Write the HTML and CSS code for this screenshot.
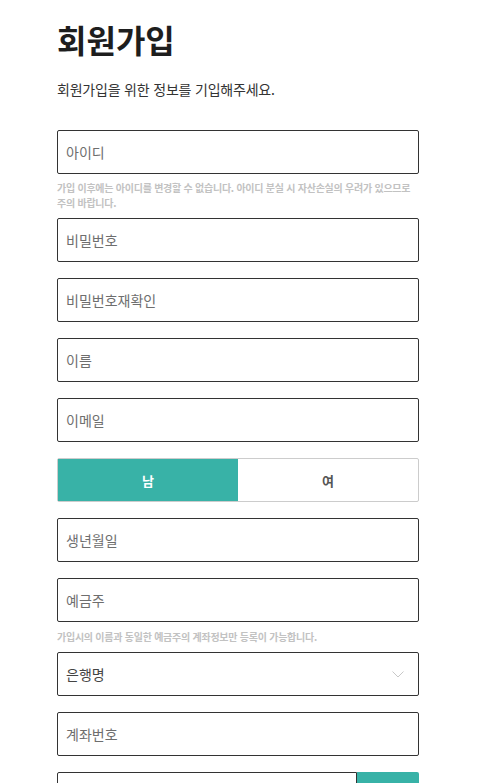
FILE: index.html
```html
<!DOCTYPE html>
<html lang="ko">
<head>
<meta charset="utf-8">
<link rel="stylesheet" href="styles.css">
</head>
<body>
<main class="page">
  <h1 class="title">회원가입</h1>
  <p class="subtitle">회원가입을 위한 정보를 기입해주세요.</p>
  <form class="form">
    <div class="group">
      <div class="field"><span class="ph">아이디</span></div>
      <p class="help">가입 이후에는 아이디를 변경할 수 없습니다. 아이디 분실 시 자산손실의 우려가 있으므로 주의 바랍니다.</p>
    </div>
    <div class="field"><span class="ph">비밀번호</span></div>
    <div class="field"><span class="ph">비밀번호재확인</span></div>
    <div class="field"><span class="ph">이름</span></div>
    <div class="field"><span class="ph">이메일</span></div>
    <div class="gender">
      <div class="opt opt-on">남</div>
      <div class="opt">여</div>
    </div>
    <div class="field"><span class="ph">생년월일</span></div>
    <div class="group">
      <div class="field"><span class="ph">예금주</span></div>
      <p class="help help-single">가입시의 이름과 동일한 예금주의 계좌정보만 등록이 가능합니다.</p>
    </div>
    <div class="field field-select"><span class="ph ph-dark">은행명</span>
      <svg class="chev" width="12" height="7" viewBox="0 0 12 7"><path d="M0.5 0.5 L6 6 L11.5 0.5" fill="none" stroke="#c8c8c8" stroke-width="1"/></svg>
    </div>
    <div class="field"><span class="ph">계좌번호</span></div>
    <div class="row">
      <div class="field field-grow"></div>
      <div class="btn"></div>
    </div>
  </form>
</main>
</body>
</html>
```

FILE: styles.css
```css
html, body {
  margin: 0;
  padding: 0;
  background: #fff;
}
body {
  font-family: "Noto Sans CJK KR", "Noto Sans", sans-serif;
  color: #222;
}
.page {
  width: 362px;
  padding: 0 0 0 57px;
}
.title {
  margin: 0;
  padding-top: 17px;
  font-size: 32px;
  line-height: 44px;
  font-weight: 700;
  color: #1e1e1e;
}
.subtitle {
  margin: 18px 0 0;
  font-size: 14px;
  letter-spacing: -0.2px;
  line-height: 20px;
  color: #333;
}
.form {
  margin-top: 31px;
  display: flex;
  flex-direction: column;
  gap: 16px;
}
.group {
  display: flex;
  flex-direction: column;
  margin-bottom: -8px;
}
.field {
  box-sizing: border-box;
  height: 44px;
  border: 1px solid #333;
  border-radius: 2px;
  display: flex;
  align-items: center;
  justify-content: space-between;
  padding: 0 14px 0 8px;
}
.ph {
  font-size: 14px;
  color: #6e6e6e;
}
.ph-dark {
  color: #444;
}
.help {
  margin: 6px 0 0;
  font-size: 10px;
  letter-spacing: -0.25px;
  line-height: 15px;
  color: #c2c2c2;
  font-weight: 700;
}
.help-single {
  margin-top: 7px;
}
.gender {
  box-sizing: border-box;
  height: 44px;
  border: 1px solid #ccc;
  border-radius: 2px;
  display: grid;
  grid-template-columns: 1fr 1fr;
}
.opt {
  display: flex;
  align-items: center;
  justify-content: center;
  font-size: 13px;
  font-weight: 700;
  color: #555;
}
.opt-on {
  background: #38b2a7;
  color: #fff;
}
.row {
  display: flex;
}
.field-grow {
  flex: 1;
  border-radius: 2px 0 0 2px;
}
.btn {
  width: 62px;
  height: 44px;
  background: #38b2a7;
  border-radius: 0 2px 2px 0;
}
```
